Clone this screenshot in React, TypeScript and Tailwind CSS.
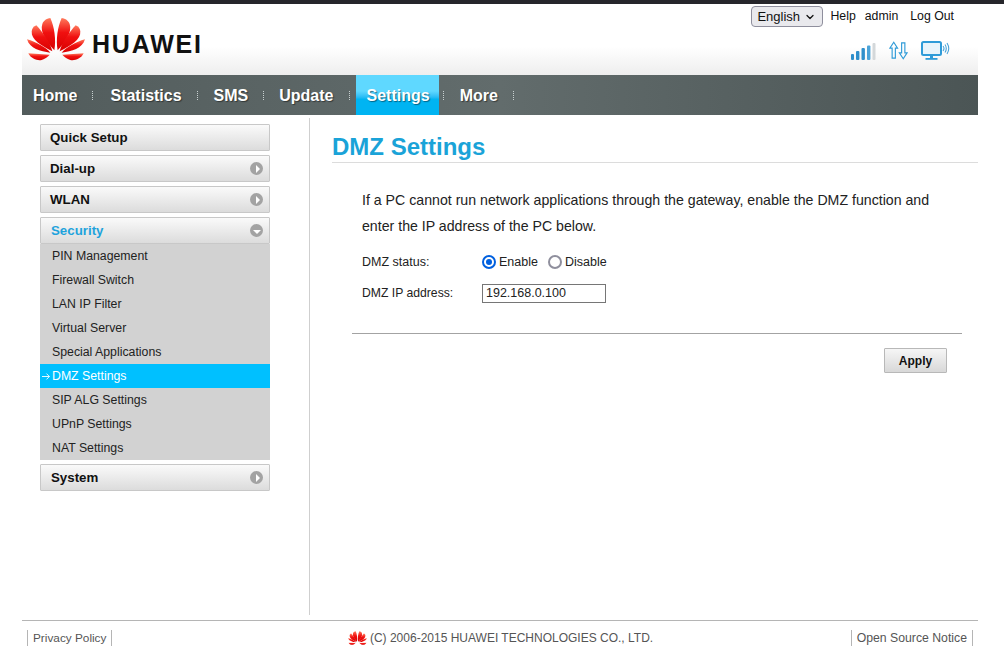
import { ChevronDown } from 'lucide-react';

const navItems = [
  { label: 'Home', sepGap: 'mr-[6px]' },
  { label: 'Statistics', sepGap: 'mr-[5px]' },
  { label: 'SMS', sepGap: 'mr-[4px]' },
  { label: 'Update', sepGap: 'mr-[6px]' },
  { label: 'Settings', sepGap: 'mr-[5px]' },
  { label: 'More', sepGap: 'mr-[5px]' },
];
const menuTop = ['Quick Setup', 'Dial-up', 'WLAN'];
const subItems = ['PIN Management', 'Firewall Switch', 'LAN IP Filter', 'Virtual Server', 'Special Applications', 'DMZ Settings', 'SIP ALG Settings', 'UPnP Settings', 'NAT Settings'];

function Petals() {
  return (
    <>
      <path d="M104 121C80 95 60 65 68 42C72 30 84 25 92 24C104 50 110 90 104 121Z" />
      <path d="M98 124C66 108 34 90 36 64C37 56 42 49 50 46C70 68 92 98 98 124Z" />
      <path d="M92 128C62 124 30 116 22 88C50 96 78 112 92 128Z" />
      <path d="M90 134L26 130C35 148 55 153 66 150C76 147 85 140 90 134Z" />
    </>
  );
}

function Logo({ id, className }: { id: string; className: string }) {
  return (
    <svg viewBox="22 22 174 130" className={className}>
      <defs>
        <linearGradient id={id} x1="0" y1="0" x2="0" y2="1">
          <stop offset="0" stopColor="#ff7a5c" />
          <stop offset="0.45" stopColor="#f01010" />
          <stop offset="1" stopColor="#d80000" />
        </linearGradient>
      </defs>
      <g fill={`url(#${id})`}>
        <Petals />
        <g transform="translate(218 0) scale(-1 1)">
          <Petals />
        </g>
      </g>
    </svg>
  );
}

function SignalIcons() {
  return (
    <div className="flex items-center gap-[13px]">
      <svg width="25" height="18" viewBox="0 0 25 18">
        <rect x="0" y="12" width="3" height="6" rx="1" fill="#2f8fcb" />
        <rect x="5" y="9" width="3.4" height="9" rx="1" fill="#2f8fcb" />
        <rect x="10.5" y="6" width="3.4" height="12" rx="1" fill="#2f8fcb" />
        <rect x="16" y="3.5" width="3.4" height="14.5" rx="1" fill="#4ba3d8" />
        <rect x="21.5" y="1" width="3" height="17" rx="1" fill="#d4d8da" />
      </svg>
      <svg width="19" height="19" viewBox="0 0 20 19" fill="none" stroke="#2f9bd8" strokeWidth="1.2">
        <path d="M5 .8L9 7H6.7V17.5H3.3V7H.9Z" />
        <path d="M15 18.2L19 12H16.7V1.5H13.3V12H10.9Z" />
      </svg>
      <svg width="29" height="19" viewBox="0 0 29 19" fill="none">
        <rect x="1" y="1" width="19" height="13" rx="1.5" stroke="#2f9bd8" strokeWidth="2" fill="#e8f4fb" />
        <rect x="9" y="15" width="3" height="2" fill="#2f9bd8" />
        <rect x="4.5" y="17" width="12" height="1.8" fill="#2f9bd8" />
        <path d="M22 5Q24 7.5 22 10M24 3.5Q26.6 7.5 24 11.5M26 2Q29.5 7.5 26 13" stroke="#4ba3d8" strokeWidth="1.1" />
      </svg>
    </div>
  );
}

function NavSep({ gap }: { gap: string }) {
  return <span className={`ml-[4px] h-[9px] w-px border-l border-dotted border-[#c8d0d0] ${gap}`} />;
}

function MenuArrow({ open }: { open?: boolean }) {
  return (
    <span className="flex size-[13px] items-center justify-center rounded-full bg-[#a3a3a3]">
      {open ? (
        <span className="mt-[2px] border-x-[4px] border-t-[4px] border-x-transparent border-t-white" />
      ) : (
        <span className="ml-[2px] border-y-[4px] border-l-[4px] border-y-transparent border-l-white" />
      )}
    </span>
  );
}

function MenuButton({ label, arrow, open, active, inset }: { label: string; arrow?: boolean; open?: boolean; active?: boolean; inset?: boolean }) {
  return (
    <div className={`flex h-[27px] items-center justify-between rounded-[1px] border border-[#c8c8c8] bg-gradient-to-b from-[#fafafa] to-[#dcdcdc] pr-[6px] ${inset ? 'pl-[10px]' : 'pl-[9px]'}`}>
      <span className={`pt-[1px] text-[13.3px] font-bold ${active ? 'text-[#1fa3dc]' : 'text-[#111]'}`}>{label}</span>
      {arrow && <MenuArrow open={open} />}
    </div>
  );
}

function Radio({ checked }: { checked?: boolean }) {
  return (
    <span className={`flex size-[14px] items-center justify-center rounded-full border-2 bg-white ${checked ? 'border-[#0060df]' : 'border-[#8f8f9d]'}`}>
      {checked && <span className="size-[6px] rounded-full bg-[#0060df]" />}
    </span>
  );
}

export default function App() {
  return (
    <div className="min-h-[646px] overflow-hidden bg-white font-['Liberation_Sans',Arial,sans-serif]">
      <div className="h-[4px] bg-[#26262b]" />
      <div className="ml-[22px] w-[956px]">
        {/* header */}
        <div className="flex h-[71px] justify-between bg-gradient-to-b from-white from-60% to-[#eeeeee] pr-[24px]">
          <div className="flex items-start pl-[5px] pt-[13px]">
            <Logo id="logoRed" className="h-[44px] w-[58px]" />
            <span className="ml-[7px] mt-[13px] text-[25px] font-bold leading-[28px] tracking-[1.8px] text-[#111]">HUAWEI</span>
          </div>
          <div className="flex flex-col items-end">
            <div className="mt-[2px] flex items-center text-[12.3px] text-[#111]">
              <button className="mr-[7px] flex h-[21px] w-[72px] items-center justify-between rounded-[4px] border border-[#8f8f9d] bg-[#e9e9ed] pl-[5px] pr-[6px] text-[13px]">
                English
                <ChevronDown className="size-[12px]" strokeWidth={2.5} />
              </button>
              <span>Help</span>
              <span className="ml-[9px]">admin</span>
              <span className="ml-[12px]">Log Out</span>
            </div>
            <div className="mr-[4px] mt-[14px]">
              <SignalIcons />
            </div>
          </div>
        </div>

        {/* nav */}
        <div className="flex h-[40px] items-center bg-gradient-to-r from-[#525c5c] via-[#626c6c] to-[#4b5555]">
          {navItems.map(({ label, sepGap }) => (
            <div key={label} className="flex h-full items-center">
              <span
                className={`flex h-full items-center pl-[11px] pt-[1px] text-[16px] font-bold text-white [text-shadow:1px_1px_1px_rgba(0,0,0,0.45)] ${
                  label === 'Settings' ? 'bg-gradient-to-b from-[#5fd8ff] from-40% to-[#00b4f2] to-60% pr-[9px]' : 'pr-[11px]'
                }`}
              >
                {label}
              </span>
              <NavSep gap={sepGap} />
            </div>
          ))}
        </div>

        {/* body */}
        <div className="flex">
          <div className="w-[248px] pl-[18px] pt-[9px]">
            <div className="flex w-[230px] flex-col gap-[4px]">
              {menuTop.map((m, i) => (
                <MenuButton key={m} label={m} arrow={i > 0} />
              ))}
              <div>
                <MenuButton label="Security" arrow open active inset />
                <div className="bg-[#d2d2d2] text-[12.3px] text-[#222]">
                  {subItems.map((s) => (
                    <div key={s} className={`flex h-[24px] items-center pl-[2px] ${s === 'DMZ Settings' ? 'bg-[#00c0ff] text-white' : ''}`}>
                      <span className="w-[10px]">
                        {s === 'DMZ Settings' && (
                          <svg width="8" height="7" viewBox="0 0 8 7" fill="none" stroke="#fff" strokeWidth="0.9">
                            <path d="M0 3.5H7.4M4.5 .6L7.4 3.5L4.5 6.4" />
                          </svg>
                        )}
                      </span>
                      {s}
                    </div>
                  ))}
                </div>
              </div>
              <MenuButton label="System" arrow inset />
            </div>
          </div>

          <div className="mt-[3px] h-[497px] w-[40px] border-r border-[#cfcfcf]" />

          <div className="flex-1 pl-[22px]">
            <h1 className="mt-[18px] border-b border-[#dcdcdc] pb-[2px] text-[24px] font-bold leading-[27px] text-[#1aa3d8]">DMZ Settings</h1>
            <div className="pl-[30px] pr-[16px]">
              <p className="mt-[24px] pr-[16px] text-[14.17px] leading-[26px] text-[#222]">
                If a PC cannot run network applications through the gateway, enable the DMZ function and enter the IP address of the PC below.
              </p>
              <div className="mt-[12px] flex h-[22px] items-center text-[12.5px] text-[#222]">
                <span className="w-[120px]">DMZ status:</span>
                <Radio checked />
                <span className="ml-[3px] w-[49px]">Enable</span>
                <Radio />
                <span className="ml-[3px]">Disable</span>
              </div>
              <div className="mt-[11px] flex h-[19px] items-center text-[12.2px] text-[#222]">
                <span className="w-[120px]">DMZ IP address:</span>
                <div className="flex h-[19px] w-[124px] items-center border border-[#767676] pl-[3px] text-[12.5px]">192.168.0.100</div>
              </div>
            </div>
            <div className="ml-[20px] mr-[16px] mt-[30px] border-t border-[#a3a3a3] pt-[14px]">
              <div className="flex justify-end pr-[15px]">
                <button className="h-[25px] w-[63px] rounded-[1px] border border-[#b8b8b8] bg-gradient-to-b from-[#f6f6f6] to-[#d8d8d8] text-[12px] font-bold text-[#111]">Apply</button>
              </div>
            </div>
          </div>
        </div>

        {/* footer */}
        <div className="mt-[5px] flex h-[26px] items-end justify-between border-t border-[#b5b5b5] text-[12px] leading-[16px] text-[#555]">
          <div className="ml-[5px] border-x border-[#b5b5b5] px-[5px] text-[11.8px]">Privacy Policy</div>
          <div className="ml-[38px] flex items-end">
            <Logo id="footerRed" className="mb-px h-[14px] w-[19px]" />
            <span className="ml-[3px]">(C) 2006-2015 HUAWEI TECHNOLOGIES CO., LTD.</span>
          </div>
          <div className="mr-[5px] border-x border-[#b5b5b5] px-[5px] text-[12.25px]">Open Source Notice</div>
        </div>
      </div>
    </div>
  );
}
